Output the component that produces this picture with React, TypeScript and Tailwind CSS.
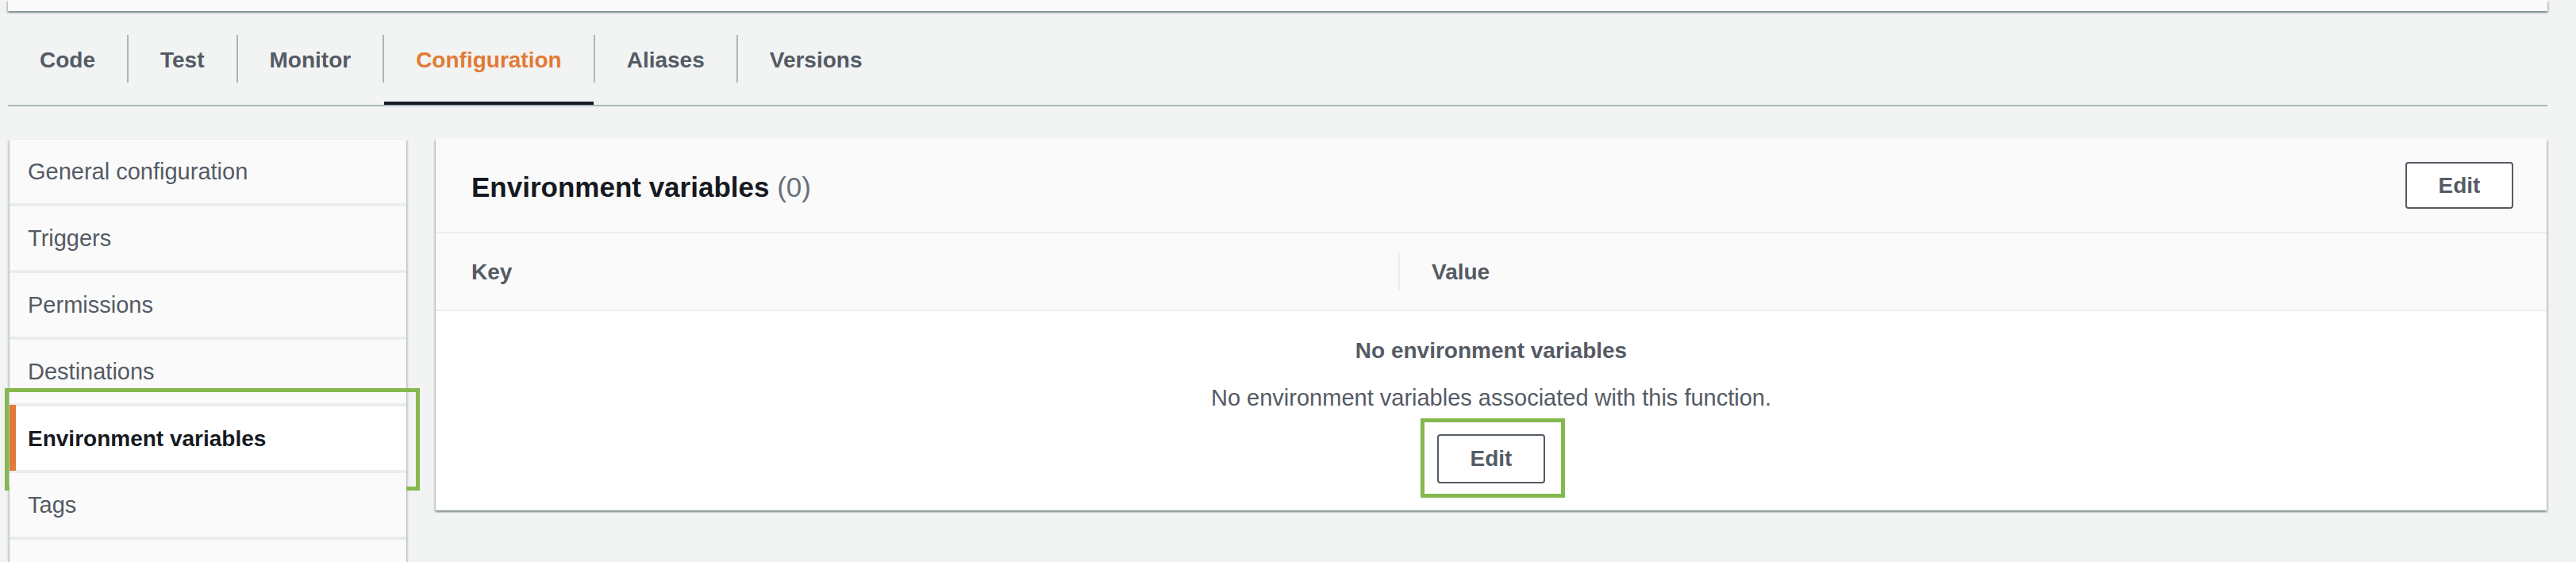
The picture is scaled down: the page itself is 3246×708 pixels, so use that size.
const tabs = ['Code', 'Test', 'Monitor', 'Configuration', 'Aliases', 'Versions'];
const activeTab = 'Configuration';

const navItems = [
  'General configuration',
  'Triggers',
  'Permissions',
  'Destinations',
  'Environment variables',
  'Tags',
  '',
];
const activeNav = 'Environment variables';

const cardShadow =
  'shadow-[0_2px_2px_0_rgba(0,28,36,0.3),2px_2px_2px_0_rgba(0,28,36,0.15),-2px_2px_2px_0_rgba(0,28,36,0.15)]';

function Tabs() {
  return (
    <div className="flex ml-[10px] w-[3200px] border-b-2 border-[#aab7b8]">
      {tabs.map((tab, i) => (
        <div key={tab} className="flex">
          {i > 0 && <div className="mt-[30px] h-[60px] w-[2px] bg-[#aab7b8]" />}
          <div className="relative h-[118px] pt-[32px] px-[40px]">
            <span
              className={`block leading-[60px] text-[28px] font-bold ${
                tab === activeTab ? 'text-[#e27a34]' : 'text-[#545b64]'
              }`}
            >
              {tab}
            </span>
            {tab === activeTab && (
              <div className="absolute left-0 right-0 bottom-0 h-[4px] bg-[#16191f]" />
            )}
          </div>
        </div>
      ))}
    </div>
  );
}

function Sidebar() {
  return (
    <div className={`w-[500px] h-[560px] pt-[1px] bg-[#eaeded] flex flex-col gap-[4px] ${cardShadow}`}>
      {navItems.map((item, i) => {
        const active = item === activeNav;
        return (
          <div
            key={i}
            className={`relative h-[80px] shrink-0 flex items-center pl-[23px] pt-[2px] ${
              active
                ? 'bg-white text-[28px] font-bold text-[#16191f]'
                : 'bg-[#fafafa] text-[29px] text-[#545b64]'
            }`}
          >
            {active && (
              <>
                <div className="absolute left-0 top-[-2px] bottom-[-1px] w-[8px] bg-[#e07b39]" />
                <div className="pointer-events-none absolute left-[-6px] right-[-17px] top-[-23px] bottom-[-26px] border-[5px] border-[#85b84f]" />
              </>
            )}
            {item}
          </div>
        );
      })}
    </div>
  );
}

function EnvPanel() {
  return (
    <div className={`w-[2660px] flex flex-col ${cardShadow}`}>
      {/* Header */}
      <div className="h-[119px] flex items-center justify-between pl-[45px] pr-[42px] bg-[#fafafa] border-b-2 border-[#eaeded]">
        <h2 className="pt-[5px] text-[35px] font-bold text-[#16191f]">
          Environment variables <span className="font-normal text-[#687078]">(0)</span>
        </h2>
        <button className="w-[136px] h-[59px] border-2 border-[#545b64] rounded-[4px] bg-white text-[28px] font-bold text-[#545b64]">
          Edit
        </button>
      </div>

      {/* Column headers */}
      <div className="h-[98px] flex items-center bg-[#fafafa] border-b-2 border-[#eaeded] text-[28px] font-bold text-[#545b64]">
        <div className="w-[1213px] pl-[45px] pt-[2px]">Key</div>
        <div className="h-[48px] w-[2px] bg-[#eaeded]" />
        <div className="pl-[40px] pt-[2px]">Value</div>
      </div>

      {/* Empty state */}
      <div className="h-[251px] bg-white flex flex-col items-center pt-[30px]">
        <p className="leading-[40px] text-[28px] font-bold text-[#545b64]">No environment variables</p>
        <p className="mt-[19px] leading-[40px] text-[29px] text-[#545b64]">
          No environment variables associated with this function.
        </p>
        <div className="relative mt-[26px]">
          <button className="w-[136px] h-[62px] border-2 border-[#545b64] rounded-[4px] bg-white text-[28px] font-bold text-[#545b64]">
            Edit
          </button>
          <div className="pointer-events-none absolute left-[-21px] right-[-25px] top-[-20px] bottom-[-18px] border-[5px] border-[#85b84f]" />
        </div>
      </div>
    </div>
  );
}

export default function App() {
  return (
    <div className="w-[3246px] h-[708px] overflow-hidden bg-[#f2f3f3] font-['Liberation_Sans',Arial,sans-serif]">
      <div className={`ml-[10px] w-[3200px] h-[14px] bg-[#fafafa] ${cardShadow}`} />
      <Tabs />
      <div className="flex items-start mt-[41px] ml-[12px] gap-[37px]">
        <Sidebar />
        <EnvPanel />
      </div>
    </div>
  );
}
